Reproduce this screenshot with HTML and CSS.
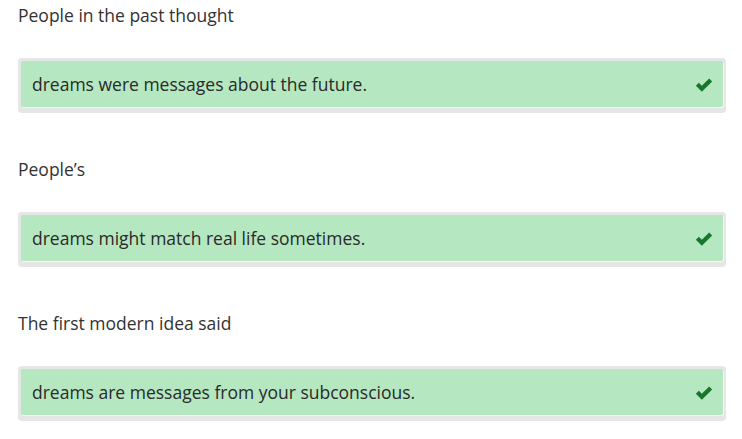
FILE: index.html
```html
<!DOCTYPE html>
<html>
<head>
<meta charset="utf-8">
<link rel="stylesheet" href="styles.css">
</head>
<body>
<div class="list">
  <div class="item">
    <div class="label">People in the past thought</div>
    <div class="answer"><div class="inner"><span class="text">dreams were messages about the future.</span><svg class="check" viewBox="0 0 16 13"><path d="M0.4 7.2 L3.2 4.4 L6 7.2 L12.8 0.4 L15.6 3.2 L6 12.8 Z" fill="#17782c"/></svg></div></div>
  </div>
  <div class="item">
    <div class="label">People’s</div>
    <div class="answer"><div class="inner"><span class="text">dreams might match real life sometimes.</span><svg class="check" viewBox="0 0 16 13"><path d="M0.4 7.2 L3.2 4.4 L6 7.2 L12.8 0.4 L15.6 3.2 L6 12.8 Z" fill="#17782c"/></svg></div></div>
  </div>
  <div class="item">
    <div class="label">The first modern idea said</div>
    <div class="answer"><div class="inner"><span class="text">dreams are messages from your subconscious.</span><svg class="check" viewBox="0 0 16 13"><path d="M0.4 7.2 L3.2 4.4 L6 7.2 L12.8 0.4 L15.6 3.2 L6 12.8 Z" fill="#17782c"/></svg></div></div>
  </div>
</div>
</body>
</html>
```
FILE: styles.css
```css
* { box-sizing: border-box; }
body {
  margin: 0;
  background: #fff;
  font-family: "Open Sans", "Liberation Sans", sans-serif;
  color: #333;
}
.list {
  display: flex;
  flex-direction: column;
  gap: 44px;
  padding: 3px 16px 0 18px;
}
.item {
  display: flex;
  flex-direction: column;
  gap: 31px;
}
.label {
  font-size: 17.5px;
  line-height: 24px;
  color: #333;
}
.answer {
  background: #e6e6e6;
  border-radius: 4px;
  padding: 3px 3px 6px 3px;
}
.inner {
  background: #b5e7c0;
  border-radius: 2px;
  height: 46px;
  display: flex;
  align-items: center;
  justify-content: space-between;
  padding: 0 10px 0 11px;
  box-shadow: 1px 1px 0 #f4fbf5;
}
.text {
  font-size: 17.5px;
  color: #2a2a2a;
}
.check {
  width: 18px;
  height: 14px;
  margin-top: 1px;
}
```
